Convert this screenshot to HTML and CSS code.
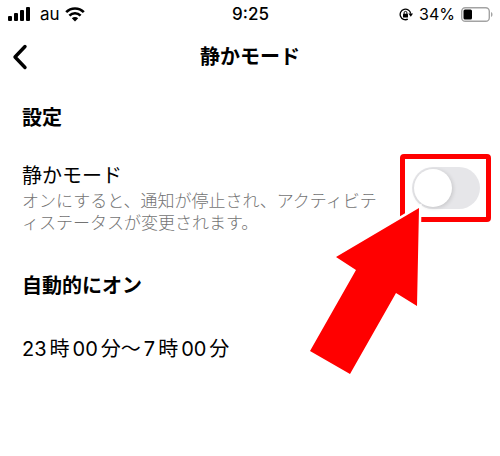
FILE: index.html
```html
<!DOCTYPE html>
<html lang="ja">
<head>
    <meta charset="UTF-8">
    <meta name="viewport" content="width=device-width, initial-scale=1.0">
    <title>静かモード</title>
    <link rel="stylesheet" href="styles.css">
</head>
<body>
    <div class="status">
        <div class="status-left">
            <svg width="22" height="14" viewBox="0 0 22 14">
                <rect x="0" y="9" width="4" height="5" rx="1"/>
                <rect x="6" y="6" width="4" height="8" rx="1"/>
                <rect x="12" y="3" width="4" height="11" rx="1"/>
                <rect x="18" y="0" width="4" height="14" rx="1"/>
            </svg>
            <span class="carrier">au</span>
            <svg width="20" height="15" viewBox="0 0 20 15">
                <path d="M1.2 5.2C6 .2 14 .2 18.8 5.2M4.4 8.6c3.2-3.2 8-3.2 11.2 0" fill="none" stroke="#000" stroke-width="2.6"/>
                <path d="M6.8 11.3c1.8-1.7 4.6-1.7 6.4 0L10 14.6z"/>
            </svg>
        </div>
        <span class="time">9:25</span>
        <div class="status-right">
            <svg width="14" height="13" viewBox="0 0 14 13">
                <path d="M8.8 11.2A5.3 5.3 0 1 1 11.7 5.6" fill="none" stroke="#000" stroke-width="1.3"/>
                <path d="M9.4 5.6h4.6l-2.2 3.2z"/>
                <rect x="4" y="5.8" width="5" height="3.8" rx=".6"/>
                <path d="M5.1 6V4.8a1.4 1.4 0 0 1 2.8 0V6" fill="none" stroke="#000"/>
            </svg>
            <span class="percent">34%</span>
            <svg width="32" height="15" viewBox="0 0 32 15">
                <rect x=".7" y=".7" width="27.6" height="13.6" rx="3.6" fill="none" stroke="#a3a3a3" stroke-width="1.4"/>
                <rect x="2.5" y="2.5" width="8.5" height="10" rx="1.5"/>
                <path d="M30 5c2 .8 2 4.2 0 5z" fill="#a3a3a3"/>
            </svg>
        </div>
    </div>

    <header class="header">
        <button class="back" aria-label="戻る">
            <svg width="16" height="26" viewBox="0 0 16 26">
                <path d="M13 2.5L3 13l10 10.5" fill="none" stroke="#000" stroke-width="3.4" stroke-linecap="round" stroke-linejoin="round"/>
            </svg>
        </button>
        <h1>静かモード</h1>
    </header>

    <main>
        <h2>設定</h2>
        <div class="row">
            <div class="row-text">
                <label for="quietMode">静かモード</label>
                <p id="quietNote">オンにすると、通知が停止され、アクティビティステータスが変更されます。</p>
            </div>
            <div class="highlight">
                <input type="checkbox" class="toggle" id="quietMode" role="switch" aria-describedby="quietNote">
                <svg class="arrow" width="114" height="172" viewBox="0 0 114 172">
                    <path d="M111 4L28 53l20 13L2 147l40 23 46-81 21 13z" fill="#f00" stroke="#fff" stroke-width="5" paint-order="stroke"/>
                </svg>
            </div>
        </div>
        <h2 class="auto-title">自動的にオン</h2>
        <p class="schedule"><span>23</span>時<span>00</span>分～<span>7</span>時<span>00</span>分</p>
    </main>
</body>
</html>
```

FILE: styles.css
```css
* { box-sizing: border-box; }
body { margin: 0; background: #fff; color: #000; font-family: Inter, "Noto Sans CJK JP", sans-serif; }
h1, h2, p { margin: 0; }
svg { display: block; flex: none; }

.status { display: grid; grid-template-columns: 1fr auto 1fr; align-items: center; height: 28px; padding: 0 7px 0 8px; font-size: 17px; }
.status-left { display: flex; align-items: center; gap: 5px; }
.carrier { padding-left: 5px; }
.time { font-weight: 500; }
.status-right { display: flex; align-items: center; justify-content: flex-end; gap: 6px; }
.percent { font-size: 16px; }

.header { display: grid; grid-template-columns: 40px 1fr 40px; align-items: center; height: 58px; }
.back { width: 40px; height: 40px; padding: 0 0 0 12px; border: 0; background: none; }
h1 { font-size: 20px; line-height: 28px; font-weight: 600; text-align: center; }

main { padding: 18px 9px 40px 22px; }
h2 { font-size: 20px; line-height: 28px; font-weight: 600; }
.row { display: flex; align-items: flex-start; margin-top: 22px; }
.row-text { flex: 1; padding: 9px 10px 0 0; }
.row-text label { display: block; font-size: 20px; line-height: 27px; }
.row-text p { color: #737373; font-size: 17px; line-height: 22px; font-weight: 300; line-break: normal; }

.highlight { position: relative; flex: none; display: flex; align-items: center; justify-content: center; width: 91px; height: 68px; border: 5px solid #f00; border-radius: 4px; }
.toggle { appearance: none; width: 68px; height: 42px; margin: 0; padding: 2px; border-radius: 21px; background: #e6e6e9; }
.toggle::before { content: ""; display: block; width: 38px; height: 38px; border-radius: 50%; background: #fff; box-shadow: 1px 1px 4px rgba(0, 0, 0, 0.15); }
.toggle:checked { background: #34c759; }
.toggle:checked::before { margin-left: auto; }
.arrow { position: absolute; top: 45px; right: 64px; overflow: visible; pointer-events: none; }

.auto-title { margin-top: 38px; }
.schedule { margin-top: 35px; font-size: 20px; line-height: 28px; }
.schedule span { margin: 0 3px; }
.schedule span:first-child { margin-left: 0; }
```
